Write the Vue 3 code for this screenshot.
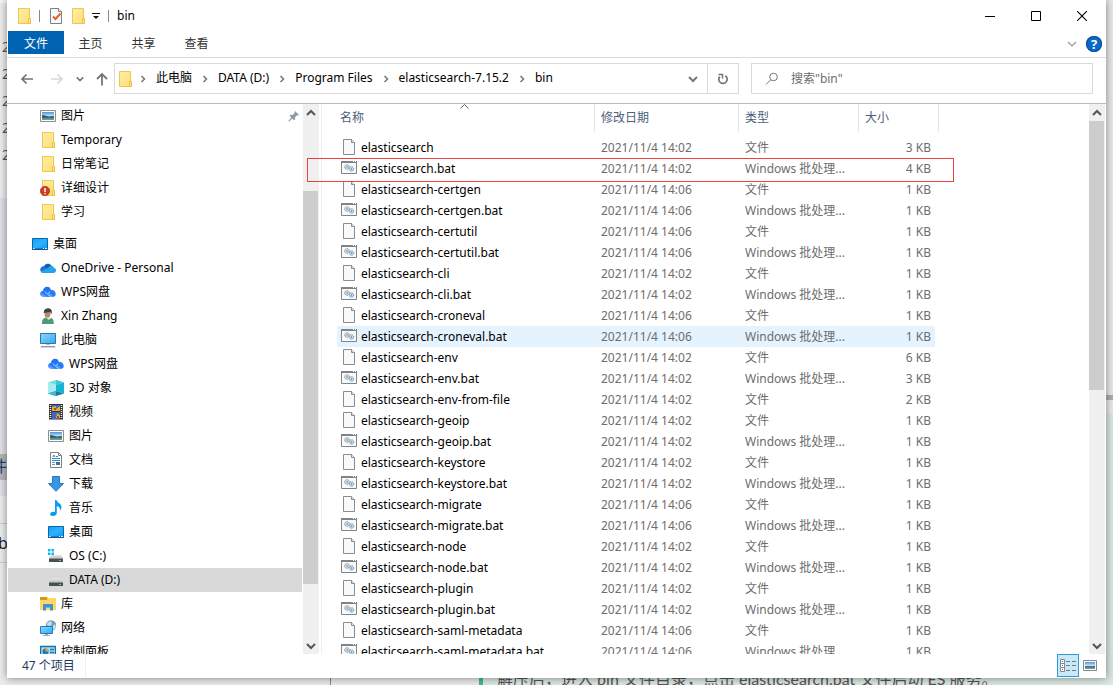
<script setup>
import { ref } from 'vue'

const query = ref('')
const tabs = ['主页', '共享', '查看']
const crumbs = ['此电脑', 'DATA (D:)', 'Program Files', 'elasticsearch-7.15.2', 'bin']

const navItems = [
  { icon: 'picture', label: '图片', level: 1, pinned: true },
  { icon: 'folder', label: 'Temporary', level: 1 },
  { icon: 'folder', label: '日常笔记', level: 1 },
  { icon: 'alert', label: '详细设计', level: 1 },
  { icon: 'folder', label: '学习', level: 1 },
  { icon: 'desktop', label: '桌面', level: 0, gap: true },
  { icon: 'onedrive', label: 'OneDrive - Personal', level: 1 },
  { icon: 'wps', label: 'WPS网盘', level: 1 },
  { icon: 'user', label: 'Xin Zhang', level: 1 },
  { icon: 'pc', label: '此电脑', level: 1 },
  { icon: 'wps', label: 'WPS网盘', level: 2 },
  { icon: 'cube', label: '3D 对象', level: 2 },
  { icon: 'video', label: '视频', level: 2 },
  { icon: 'picture', label: '图片', level: 2 },
  { icon: 'docs', label: '文档', level: 2 },
  { icon: 'download', label: '下载', level: 2 },
  { icon: 'music', label: '音乐', level: 2 },
  { icon: 'desktop', label: '桌面', level: 2 },
  { icon: 'osdrive', label: 'OS (C:)', level: 2 },
  { icon: 'drive', label: 'DATA (D:)', level: 2, selected: true },
  { icon: 'library', label: '库', level: 1 },
  { icon: 'network', label: '网络', level: 1 },
  { icon: 'control', label: '控制面板', level: 1 },
]

const files = [
  ['elasticsearch', '02', 3],
  ['elasticsearch.bat', '02', 4],
  ['elasticsearch-certgen', '06', 1],
  ['elasticsearch-certgen.bat', '06', 1],
  ['elasticsearch-certutil', '06', 1],
  ['elasticsearch-certutil.bat', '06', 1],
  ['elasticsearch-cli', '02', 1],
  ['elasticsearch-cli.bat', '02', 1],
  ['elasticsearch-croneval', '06', 1],
  ['elasticsearch-croneval.bat', '06', 1],
  ['elasticsearch-env', '02', 6],
  ['elasticsearch-env.bat', '02', 3],
  ['elasticsearch-env-from-file', '02', 2],
  ['elasticsearch-geoip', '02', 1],
  ['elasticsearch-geoip.bat', '02', 1],
  ['elasticsearch-keystore', '02', 1],
  ['elasticsearch-keystore.bat', '02', 1],
  ['elasticsearch-migrate', '06', 1],
  ['elasticsearch-migrate.bat', '06', 1],
  ['elasticsearch-node', '02', 1],
  ['elasticsearch-node.bat', '02', 1],
  ['elasticsearch-plugin', '02', 1],
  ['elasticsearch-plugin.bat', '02', 1],
  ['elasticsearch-saml-metadata', '06', 1],
  ['elasticsearch-saml-metadata.bat', '06', 1],
].map(([name, minute, size]) => ({
  name,
  date: `2021/11/4 14:${minute}`,
  bat: name.endsWith('.bat'),
  size: `${size} KB`,
}))
const hovered = 'elasticsearch-croneval.bat'
</script>

<template>
  <div class="screen">
    <svg class="defs" aria-hidden="true">
      <defs>
        <linearGradient id="g-folder" x1="0" y1="0" x2="1" y2="1"><stop offset="0" stop-color="#ffeda6" /><stop offset="1" stop-color="#ffdd75" /></linearGradient>
        <linearGradient id="g-blue" x1="0" y1="0" x2="1" y2="1"><stop offset="0" stop-color="#12a0f5" /><stop offset=".5" stop-color="#30b0ff" /><stop offset="1" stop-color="#0b94ec" /></linearGradient>
        <linearGradient id="g-pc" x1="0" y1="0" x2="1" y2="1"><stop offset="0" stop-color="#8fd6ff" /><stop offset="1" stop-color="#2fa9f6" /></linearGradient>
        <linearGradient id="g-sky" x1="0" y1="0" x2="0" y2="1"><stop offset="0" stop-color="#4c8fe0" /><stop offset=".5" stop-color="#c5e2f5" /><stop offset=".6" stop-color="#46746c" /><stop offset="1" stop-color="#6fa3ae" /></linearGradient>
        <linearGradient id="g-drive" x1="0" y1="0" x2="0" y2="1"><stop offset="0" stop-color="#e6e6e6" /><stop offset="1" stop-color="#bdbdbd" /></linearGradient>
        <linearGradient id="g-wps" x1="0" y1="1" x2="1" y2="0"><stop offset="0" stop-color="#8ac3ff" /><stop offset=".5" stop-color="#1f77fa" /><stop offset="1" stop-color="#2e86ff" /></linearGradient>
      </defs>
      <symbol id="i-folder" viewBox="0 0 16 16">
        <path d="M2.500.500h11V11h1v4.500h-12z" fill="url(#g-folder)" stroke="#ecc94e" />
        <path d="M12.500 15.500V10.500h2v5z" fill="#ffe794" stroke="#ecc040" />
      </symbol>
      <symbol id="i-alert" viewBox="0 0 16 16">
        <path d="M2.500.500h11V11h1v4.500h-12z" fill="url(#g-folder)" stroke="#ecc94e" />
        <path d="M12.500 15.500V10.500h2v5z" fill="#ffe794" stroke="#ecc040" />
        <circle cx="5" cy="11" r="4.700" fill="#cf3a22" stroke="#a92812" stroke-width=".6" />
        <path d="M5 8v4M5 13v1.300" stroke="#fff" stroke-width="1.500" />
      </symbol>
      <symbol id="i-picture" viewBox="0 0 16 16">
        <path d="M.500 2.500h15v11H.500z" fill="#fff" stroke="#8d9093" />
        <path d="M2 4h12v8H2z" fill="url(#g-sky)" />
        <path d="M2 7c3 0 5 1 7 2l5-1v1.500H2z" fill="#315e50" />
      </symbol>
      <symbol id="i-desktop" viewBox="0 0 16 16">
        <path d="M.500 2.500h15v11H.500z" fill="url(#g-blue)" stroke="#0867a8" />
        <path d="M0 12.500h16v1H0z" fill="#07558c" />
        <path d="M1 12.500h1.500M11 12.500h1M13 12.500h2" stroke="#e8f6ff" />
      </symbol>
      <symbol id="i-onedrive" viewBox="0 0 16 16">
        <path d="M3 9C3.500 4.500 8 2 11.500 5.500l-3 4z" fill="#0a5fb5" />
        <path d="M.500 11C-.500 8 2 5.500 5 6.500L11 10l-3 3H3.500C2 13 .900 12.300.500 11z" fill="#1277d4" />
        <path d="M8 8c1.500-3 5-3 5.800-.300 2.200.500 2.800 2.800 1.700 4.300-.700.800-1.500 1-2.500 1H4c-1.500 0-2.500-.600-3.200-1.500z" fill="#28a3ea" />
      </symbol>
      <symbol id="i-wps" viewBox="0 0 16 16">
        <path d="M3 7C3 3.500 6.500 1.500 9.500 3.300L13 10l-2.500 2.500z" fill="#1c74f4" />
        <path d="M8.500 8.500c1-3 5-3.500 6.500-.800C17 11 14.500 13.500 12 13H9z" fill="url(#g-wps)" />
        <path d="M4 13C1 13.500-.500 11 .200 9 1 6.500 4.500 6 6 8l5 5z" fill="url(#g-wps)" />
        <path d="M5 7.500l5.500 5.500M8.300 9.500l1.500-2" stroke="#e8f3ff" stroke-width=".8" />
      </symbol>
      <symbol id="i-user" viewBox="0 0 16 16">
        <path d="M2 16c0-4 1-6 4-6.500l3 2 2-1.500c2.500.800 2.800 3 2.800 6z" fill="#4c9a79" />
        <path d="M6 9.500l3 2.500.500-3z" fill="#f2e7d3" />
        <ellipse cx="7.500" cy="5.500" rx="3" ry="4.200" fill="#b98b6d" />
        <path d="M3.800 5C3 0 11-1.500 11.800 3.200V6L10 4z" fill="#44403d" />
      </symbol>
      <symbol id="i-pc" viewBox="0 0 16 16">
        <path d="M.500 1.500h15v10H.500z" fill="url(#g-pc)" stroke="#33779d" />
        <path d="M6 12h4v1H6z" fill="#b7bdc1" />
        <path d="M1 14.500h14" stroke="#8395a8" /><path d="M0 15.500h16" stroke="#d6dce4" />
      </symbol>
      <symbol id="i-cube" viewBox="0 0 16 16">
        <path d="M8 0l8 2.500L8 5 0 2.500z" fill="#71dbe6" />
        <path d="M0 2.500L8 5v6L0 13.500z" fill="#a3eef0" /><path d="M16 2.500L8 5v6l8 2.500z" fill="#19b4d5" />
        <path d="M0 13.500L8 11l8 2.500L8 16z" fill="#0b7f9d" /><path d="M8 11v5l-8-2.500z" fill="#42b9c8" />
        <path d="M8 0v5l8-2.500z" fill="#40c3dc" />
      </symbol>
      <symbol id="i-video" viewBox="0 0 16 16">
        <path d="M1 0h14v15.500H1z" fill="#333" />
        <path d="M2.500 1v14M13.500 1v14" stroke="#f6f6f6" stroke-width="1.500" stroke-dasharray="1 1" />
        <path d="M4 1h8v6H4zM4 8h8v7H4z" fill="#3b67c9" />
        <path d="M4 3l4-1v3l4-3v5H4zM9 9l3 2v3H8z" fill="#e3ae32" /><path d="M6 4h2v2H6zM9 12h2v2H9z" fill="#b2462d" />
      </symbol>
      <symbol id="i-docs" viewBox="0 0 16 16">
        <path d="M2.500.500h8l3 3v12h-11z" fill="#fff" stroke="#7c8083" /><path d="M10.500.500v3h3" fill="none" stroke="#7c8083" />
        <path d="M5 5l1-2 1 2M8 4.500h2M4 6.500h8M4 8.500h8" fill="none" stroke="#278bc9" />
        <path d="M4 10.500h3M4 12.500h3" stroke="#8b8f92" /><path d="M8 10h4v3H8z" fill="#426f91" />
      </symbol>
      <symbol id="i-download" viewBox="0 0 16 16">
        <path d="M4.500.500h7v7h4L8 15.300.500 7.500h4z" fill="#3796e5" stroke="#2475bd" />
      </symbol>
      <symbol id="i-music" viewBox="0 0 16 16">
        <path d="M7 0h1.500c.500 3 5 3.500 5 7 0 1.500-.700 2.800-1.500 3.500.300-2.500-1-4-3.200-4.500V13c0 2-2 3-4 3-1.800 0-3-.800-2.700-2 .400-1.700 2.700-2.700 4.900-2z" fill="#0a9bf2" />
      </symbol>
      <symbol id="i-drive" viewBox="0 0 16 16">
        <path d="M3 6.500h10l2 4H1z" fill="url(#g-drive)" />
        <path d="M1 10.500h14V14H1z" fill="#4b4f4f" /><path d="M11 12h2v1h-2z" fill="#42e06c" />
      </symbol>
      <symbol id="i-osdrive" viewBox="0 0 16 16">
        <path d="M3 7h10l2 3.500H1z" fill="url(#g-drive)" />
        <path d="M1 10.500h14V14H1z" fill="#4b4f4f" /><path d="M11 12h2v1h-2z" fill="#42e06c" />
        <path d="M-1 0h8v7h-8z" fill="#fff" /><path d="M0 1h2.500v2.500H0zM3.500 1H6v2.500H3.500zM0 4.500h2.500V7H0zM3.500 4.500H6V7H3.500z" fill="#12b5ea" />
      </symbol>
      <symbol id="i-library" viewBox="0 0 16 16">
        <path d="M0 1h7l1 2-1 2H0z" fill="#d39a13" /><path d="M0 4h7l1-2h8v12H0z" fill="#ffd765" />
        <path d="M3 14.500V8h10v6.500h-3v-3H6v3z" fill="#3c92df" />
      </symbol>
      <symbol id="i-network" viewBox="0 0 16 16">
        <circle cx="11" cy="5.500" r="5.300" fill="#6d9fc1" /><path d="M7 3l4-2 1 3-2 2-3-1zM12 7l3-3 1 3-2 3z" fill="#c7e2ee" />
        <path d="M.500 6.500h12v7H.500z" fill="url(#g-pc)" stroke="#1f7fb8" /><path d="M5 14h3v1H5z" fill="#9aa" /><path d="M3 15.500h7" stroke="#a7b1b8" />
      </symbol>
      <symbol id="i-control" viewBox="0 0 16 16">
        <path d="M.500 2.500h15v12H.500z" fill="#a6dcf8" stroke="#19719f" stroke-width="1.500" />
        <circle cx="5.500" cy="7.500" r="3" fill="#2179bd" /><path d="M5.500 7.500v-3a3 3 0 0 1 3 3z" fill="#f6a229" />
        <path d="M10 5.500h4M10 8.500h4" stroke="#1875b4" stroke-width="1.500" />
      </symbol>
      <symbol id="i-file" viewBox="0 0 16 16">
        <path d="M2.500.500h8l3 3v12h-11z" fill="#f9f9f9" stroke="#8a8c8e" /><path d="M10.500.500v3h3" fill="#e7e7e7" stroke="#8a8c8e" />
      </symbol>
      <symbol id="i-bat" viewBox="0 0 16 16">
        <path d="M.500 1.500h15v12H.500z" fill="#fafafa" stroke="#7e8588" /><path d="M0 2h16" stroke="#7e8588" stroke-width="2" /><path d="M12 1.500h1M14 1.500h1" stroke="#fff" />
        <circle cx="6" cy="7" r="2.300" fill="#e5eaec" stroke="#7f8a90" stroke-dasharray="1.500 .4" /><circle cx="6" cy="7" r=".8" fill="#6a757b" />
        <circle cx="10.500" cy="9" r="2.200" fill="#d0e6f6" stroke="#6398bd" stroke-dasharray="1.500 .4" /><circle cx="10.500" cy="9" r=".8" fill="#4a7fa5" />
      </symbol>
      <symbol id="i-check" viewBox="0 0 16 16">
        <path d="M2.500.500h8l3 3v12h-11z" fill="#f7f8fa" stroke="#7c7f83" /><path d="M10.500.500v3h3" fill="#fff" stroke="#7c7f83" />
        <path d="M5 8.500l2.500 2.500 5-5.500" fill="none" stroke="#e9602b" stroke-width="2" />
      </symbol>
      <symbol id="i-down" viewBox="0 0 10 10"><path d="M1 3l4 4 4-4" fill="none" stroke="currentColor" stroke-width="2" /></symbol>
      <symbol id="i-up" viewBox="0 0 10 10"><path d="M1 7l4-4 4 4" fill="none" stroke="currentColor" stroke-width="2" /></symbol>
    </svg>

    <div class="behind" aria-hidden="true">
      <div class="strip-left">
        <div class="digits"><span v-for="n in 5" :key="n">2</span></div>
        <div class="panel-blue"></div>
        <div class="piece">件</div>
        <div class="panel-blue short"></div>
        <div class="panel-gray"></div>
        <div class="letter">b</div>
      </div>
      <div class="strip-right"></div>
      <div class="strip-bottom"><p>解压后，进入 bin 文件目录，点击 elasticsearch.bat 文件启动 ES 服务。</p></div>
    </div>

    <main class="window">
      <header class="titlebar">
        <svg class="ic"><use href="#i-folder" /></svg>
        <i class="bar"></i>
        <button class="quick" aria-label="属性"><svg class="ic"><use href="#i-check" /></svg></button>
        <button class="quick" aria-label="新建文件夹"><svg class="ic"><use href="#i-folder" /></svg></button>
        <button class="quick more" aria-label="自定义快速访问工具栏">
          <svg width="8" height="8" viewBox="0 0 8 8"><path d="M0 1.500h8" stroke="#111" /><path d="M1 4h6L4 7z" fill="#111" /></svg>
        </button>
        <i class="bar"></i>
        <h1>bin</h1>
        <div class="controls">
          <button aria-label="最小化"><svg width="10" height="10"><path d="M0 5.500h10" stroke="#000" /></svg></button>
          <button aria-label="最大化"><svg width="10" height="10"><path d="M.500.500h9v9h-9z" fill="none" stroke="#000" /></svg></button>
          <button aria-label="关闭"><svg width="10" height="10"><path d="M0 0l10 10M10 0L0 10" stroke="#000" stroke-width="1.100" /></svg></button>
        </div>
      </header>

      <nav class="ribbon">
        <button class="file-tab">文件</button>
        <button v-for="t in tabs" :key="t">{{ t }}</button>
        <div class="ribbon-end">
          <button class="plain" aria-label="展开功能区"><svg width="10" height="10" viewBox="0 0 10 10"><path d="M1 3l4 4 4-4" fill="none" stroke="#999" stroke-width="1.200" /></svg></button>
          <button class="help" aria-label="帮助">?</button>
        </div>
      </nav>

      <div class="address-row">
        <div class="history">
          <button class="plain" aria-label="返回"><svg width="14" height="14" viewBox="0 0 14 14"><path d="M13 7H2M6.500 2.500L2 7l4.500 4.500" fill="none" stroke="#747474" stroke-width="1.700" /></svg></button>
          <button class="plain" aria-label="前进"><svg width="14" height="14" viewBox="0 0 14 14"><path d="M1 7h11M7.500 2.500L12 7l-4.500 4.500" fill="none" stroke="#d8d8d8" stroke-width="1.700" /></svg></button>
          <button class="plain tiny" aria-label="最近位置"><svg width="8" height="8" viewBox="0 0 10 10"><path d="M1 3l4 4 4-4" fill="none" stroke="#777" stroke-width="2" /></svg></button>
          <button class="plain" aria-label="上移"><svg width="14" height="14" viewBox="0 0 14 14"><path d="M7 13.500V2M2 7l5-5 5 5" fill="none" stroke="#747474" stroke-width="1.800" /></svg></button>
        </div>
        <div class="address">
          <svg class="ic"><use href="#i-folder" /></svg>
          <template v-for="c in crumbs" :key="c">
            <svg class="chev" viewBox="0 0 6 8"><path d="M1.500 1l3 3-3 3" fill="none" stroke="#777" stroke-width="1.500" /></svg>
            <a href="#">{{ c }}</a>
          </template>
          <button class="plain drop" aria-label="以前的位置"><svg width="10" height="10"><use href="#i-down" /></svg></button>
          <button class="refresh" aria-label="刷新">
            <svg width="12" height="12" viewBox="0 0 12 12"><path d="M8.300 2.700A4.200 4.200 0 1 1 2.700 3.600" fill="none" stroke="#747474" stroke-width="1.700" /><path d="M1.500 1.500h4v4" fill="none" stroke="#747474" stroke-width="1.500" /></svg>
          </button>
        </div>
        <label class="search">
          <svg width="14" height="14" viewBox="0 0 14 14"><circle cx="8.500" cy="5" r="3.800" fill="none" stroke="#777" /><path d="M5.800 7.700L1 12.500" stroke="#777" /></svg>
          <input v-model="query" type="text" placeholder="搜索&quot;bin&quot;" aria-label="搜索" />
        </label>
      </div>

      <div class="content">
        <ul class="tree">
          <li v-for="(n, i) in navItems" :key="i" :class="['level' + n.level, { gap: n.gap }]">
            <a href="#" :class="{ selected: n.selected }">
              <svg class="ic"><use :href="'#i-' + n.icon" /></svg>
              <span>{{ n.label }}</span>
              <svg v-if="n.pinned" class="pin" width="12" height="12" viewBox="0 0 12 12"><path d="M7 1l4 4-1 .500-1-.200-2 2 .200 2.200L6 10.300 1.700 6l.800-1.200 2.200.200 2-2L6.500 2z" fill="#8c9aa5" /><path d="M4 8L.800 11.200" stroke="#8c9aa5" stroke-width="1.200" /></svg>
            </a>
          </li>
        </ul>
        <div class="scroll side">
          <button aria-label="向上滚动"><svg width="10" height="10"><use href="#i-up" /></svg></button>
          <div class="track"><i class="before"></i><i class="thumb"></i><i class="after"></i></div>
          <button aria-label="向下滚动"><svg width="10" height="10"><use href="#i-down" /></svg></button>
        </div>
        <div class="list">
          <table>
            <colgroup><col class="c-name" /><col class="c-date" /><col class="c-type" /><col class="c-size" /></colgroup>
            <thead>
              <tr>
                <th scope="col">名称<svg class="sort" width="9" height="5" viewBox="0 0 9 5"><path d="M.500 4.500l4-4 4 4" fill="none" stroke="#666" /></svg></th>
                <th scope="col">修改日期</th><th scope="col">类型</th><th scope="col">大小</th>
              </tr>
            </thead>
            <tbody>
              <tr v-for="f in files" :key="f.name" :class="{ hovered: f.name === hovered }">
                <td><div class="name"><svg class="ic"><use :href="f.bat ? '#i-bat' : '#i-file'" /></svg>{{ f.name }}</div></td>
                <td>{{ f.date }}</td>
                <td>{{ f.bat ? 'Windows 批处理...' : '文件' }}</td>
                <td>{{ f.size }}</td>
              </tr>
            </tbody>
          </table>
        </div>
        <div class="scroll main">
          <button aria-label="向上滚动"><svg width="10" height="10"><use href="#i-up" /></svg></button>
          <div class="track"><i class="thumb"></i><i class="after"></i></div>
          <button aria-label="向下滚动"><svg width="10" height="10"><use href="#i-down" /></svg></button>
        </div>
      </div>

      <footer class="status">
        <span>47 个项目</span>
        <div class="views">
          <button class="active" aria-label="详细信息">
            <svg width="16" height="14" viewBox="0 0 16 14"><path d="M.500.500h4v4h-4zM.500 4.500h4v4h-4zM.500 8.500h4v4h-4z" fill="#fff" stroke="#7e8c94" /><path d="M2 2.500h1M2 6.500h1" stroke="#2b75a8" /><path d="M2 10.500h1" stroke="#d0492d" /><path d="M6 2.500h4M12 2.500h4M6 6.500h4M12 6.500h4M6 11.500h4M12 11.500h4" stroke="#6c7a82" /></svg>
          </button>
          <button aria-label="大图标">
            <svg width="14" height="11" viewBox="0 0 14 11"><path d="M.500.500h13v10H.500z" fill="#fff" stroke="#85898c" /><path d="M2 2h10v7H2z" fill="url(#g-sky)" /></svg>
          </button>
        </div>
      </footer>
      <div class="marker"></div>
    </main>
  </div>
</template>

<style>
html, body { height: 100%; overflow: hidden; }
</style>

<style scoped>
* { box-sizing: border-box; }
.screen {
  position: relative;
  height: 100vh;
  padding: 0 7px 7px;
  overflow: hidden;
  background: #e9e9e9;
  font: 12px/16px "Noto Sans", "Noto Sans CJK SC", sans-serif;
  color: #000;
}
.defs { position: absolute; width: 0; height: 0; }
.ic { width: 16px; height: 16px; flex: none; overflow: hidden; }
button { font: inherit; color: inherit; border: 0; padding: 0; background: none; display: flex; align-items: center; justify-content: center; }
a { color: inherit; text-decoration: none; }

.behind { position: absolute; inset: 0; color: #555; }
.strip-left { position: absolute; left: 0; top: 0; width: 7px; height: 100%; overflow: hidden; background: #ececec; display: flex; flex-direction: column; }
.digits { height: 198px; padding: 30px 0 0 2px; border-top: 3px solid #f5f5f5; font-size: 14px; line-height: 27px; display: flex; flex-direction: column; flex: none; }
.panel-blue { height: 256px; background: #dfe1e8; flex: none; }
.panel-blue.short { height: 16px; }
.piece { height: 26px; background: #b5b6b9; color: #20426b; font-size: 16px; line-height: 24px; text-indent: -9px; white-space: nowrap; flex: none; }
.panel-gray { height: 28px; border-bottom: 1px solid #ccc; flex: none; }
.letter { height: 39px; border-bottom: 1px solid #ccc; color: #222; font-size: 16px; line-height: 38px; text-indent: -2px; flex: none; }
.strip-right { position: absolute; right: 0; top: 0; width: 7px; height: 100%; background: linear-gradient(#e8e8e8 395px, #a9b0ae 395px, #a9b0ae 400px, #e8e8e8 400px, #e8e8e8 413px, #dae6e1 413px); }
.strip-bottom { position: absolute; left: 330px; right: 0; bottom: 0; height: 7px; overflow: hidden; border-left: 1px solid #888; padding-left: 148px; }
.strip-bottom p { margin: 0; height: 7px; border-left: 4px solid #42b983; background: #dae6e1; padding-left: 14px; font: 16px/1px Lato, "Noto Sans CJK SC", sans-serif; white-space: nowrap; color: #555; }

.window { position: relative; height: 100%; display: flex; flex-direction: column; background: #fff; box-shadow: 0 0 8px rgba(0, 0, 0, .45); }

.titlebar { flex: none; height: 31px; display: flex; align-items: center; padding-left: 9px; }
.bar { width: 1px; height: 12px; background: #888; margin: 0 8px 0 7px; }
.quick { margin-right: 6px; }
.more { margin: 0 1px 0 0; }
h1 { margin: 0; font: inherit; }
.controls { margin-left: auto; display: flex; align-self: stretch; padding-right: 1px; }
.controls button { width: 46px; }

.ribbon { flex: none; height: 27px; display: flex; align-items: flex-start; border-bottom: 1px solid #dadbdc; padding-left: 1px; }
.ribbon > button { width: 53px; height: 23px; padding-top: 2px; color: #333; }
.ribbon > .file-tab { width: 56px; background: #0063b1; color: #fff; }
.ribbon-end { margin-left: auto; display: flex; align-items: center; gap: 9px; height: 26px; padding-right: 4px; }
.help { width: 16px; height: 16px; border-radius: 50%; background: #0768c8; box-shadow: 0 0 0 1px #07519c inset; color: #fff; font-size: 13px; font-weight: 700; }

.address-row { flex: none; height: 46px; display: grid; grid-template-columns: 107px 625fr 354fr; grid-template-rows: 31px; padding: 5px 13px 0 0; border-bottom: 1px solid #b9b9b9; }
.history { display: flex; align-items: center; padding-left: 13px; gap: 16px; }
.history .tiny { margin: 0 -5px 0 -4px; }
.address { min-width: 0; border: 1px solid #d9d9d9; display: flex; align-items: center; padding-left: 2px; white-space: nowrap; }
.address .ic { margin-right: -3px; }
.address a { padding-bottom: 1px; }
.chev { width: 6px; height: 8px; margin: 0 10px; flex: none; }
.address .drop { margin-left: auto; width: 29px; color: #777; height: 29px; }
.refresh { width: 31px; height: 29px; border-left: 1px solid #d9d9d9; }
.search { margin-left: 12px; min-width: 0; border: 1px solid #d9d9d9; display: flex; align-items: center; gap: 12px; padding-left: 13px; }
.search input { flex: 1; min-width: 0; border: 0; outline: 0; padding: 0; font: inherit; background: none; }
.search input::placeholder { color: #6d6d6d; opacity: 1; }

.content { flex: 1; min-height: 0; display: flex; }
.tree { list-style: none; margin: 0; padding: 0 1px; width: 296px; overflow: hidden; flex: none; }
.tree a { display: flex; align-items: center; height: 24px; gap: 5px; padding-left: 32px; }
.level0 a { padding-left: 24px; }
.level2 a { padding-left: 40px; }
.gap { margin-top: 8px; }
.tree .selected { background: #d9d9d9; }
.pin { margin: 0 2px 0 auto; }

.scroll { width: 16px; flex: none; background: #f0f0f0; display: flex; flex-direction: column; color: #555; }
.scroll button { height: 17px; flex: none; }
.track { flex: 1; display: flex; flex-direction: column; }
.thumb { background: #cdcdcd; margin-right: 1px; }
.side .before { flex: 70; } .side .thumb { flex: 393; } .side .after { flex: 53; }
.main .thumb { flex: 269; } .main .after { flex: 247; }
.scroll.main { margin-right: 1px; }

.list { flex: 1; min-width: 0; overflow: hidden; margin-left: 2px; border-left: 1px solid #f0f0f0; padding-left: 15px; }
table { border-collapse: separate; border-spacing: 0; table-layout: fixed; width: 602px; }
.c-name { width: 258px; } .c-date { width: 144px; } .c-type { width: 120px; } .c-size { width: 80px; }
th { position: relative; height: 28px; padding: 0 0 0 6px; font-weight: 400; text-align: left; color: #4c607a; border-right: 1px solid #e5e5e5; }
th:first-child { padding-left: 3px; }
.sort { position: absolute; left: 123px; top: 0; }
tbody::before { content: ""; display: block; height: 5px; }
td { height: 21px; padding: 0 0 0 6px; color: #6d6d6d; white-space: nowrap; }
td:first-child { padding-left: 4px; color: #000; }
td:last-child { text-align: right; padding-right: 4px; border-right: 4px solid transparent; background-clip: padding-box; }
.name { display: flex; align-items: center; gap: 4px; height: 21px; }
.name .ic { align-self: flex-start; margin-top: 2px; }
.hovered td { background-color: #e5f3ff; }

.status { flex: none; height: 24px; display: flex; justify-content: space-between; padding-left: 15px; color: #1e395b; }
.status span { line-height: 24px; padding-right: 10px; border-right: 1px solid #f0f0f0; }
.views { display: flex; padding-right: 5px; }
.views button { width: 22px; height: 23px; }
.views .active { background: #cce8f6; border: 1px solid #26a0da; }

.marker { position: absolute; left: 300px; top: 158px; width: 647px; height: 24px; border: 1px solid #f0403c; pointer-events: none; }
</style>
